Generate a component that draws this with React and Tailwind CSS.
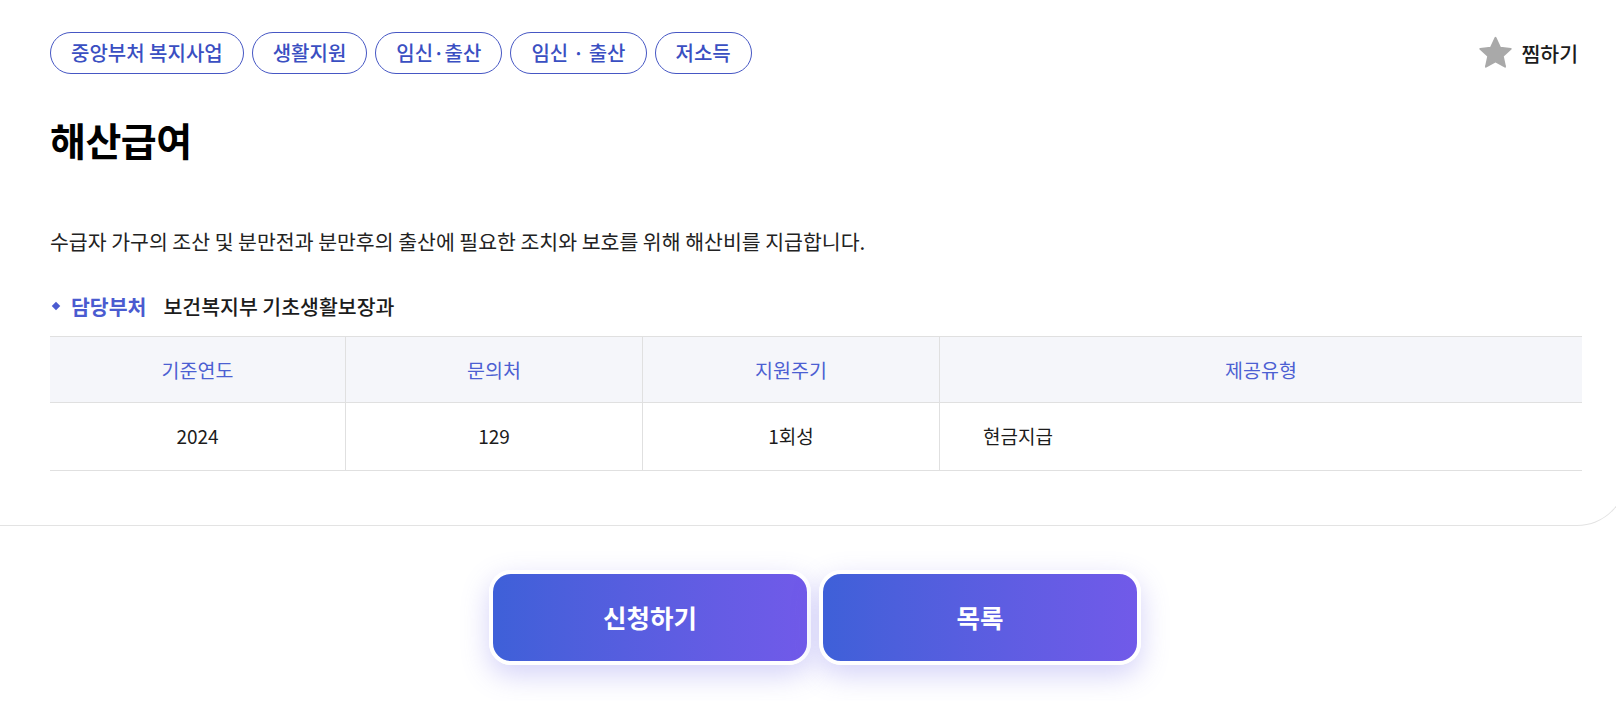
import React from "react";

const tags = ["중앙부처 복지사업", "생활지원", "임신·출산", "임신 · 출산", "저소득"];

export default function App() {
  return (
    <div
      className="w-[1616px] h-[701px] overflow-hidden bg-white text-[#222]"
      style={{ fontFamily: '"Noto Sans CJK KR", "Noto Sans", sans-serif' }}
    >
      <div className="ml-[-80px] w-[1707px] border-b border-r border-[#e3e3e3] rounded-br-[50px] rounded-bl-[50px] pt-[32px] pb-[54px] pl-[130px] pr-[44px]">
        <div className="flex items-center justify-between h-[42px]">
          <div className="flex gap-[8px]">
            {tags.map((t) => (
              <span
                key={t}
                className="h-[42px] flex items-center px-[20px] rounded-full border border-[#4657c4] text-[#3a4fc2] text-[20px] font-medium leading-none"
              >
                {t}
              </span>
            ))}
          </div>
          <div className="flex items-center gap-[7px] mr-[4px]">
            <svg width="37" height="36" viewBox="0 0 24 24">
              <path
                d="M12 1.8l3.1 6.6 7.1.8-5.3 4.9 1.5 7.1L12 17.6l-6.4 3.6 1.5-7.1L1.8 9.2l7.1-.8z"
                fill="#a9a9a9"
                stroke="#a9a9a9"
                strokeWidth="1.2"
                strokeLinejoin="round"
              />
            </svg>
            <span className="text-[20.5px] font-medium text-[#1c1c1c]">찜하기</span>
          </div>
        </div>

        <h1 className="mt-[42px] text-[39px] leading-[47px] font-bold text-black tracking-[-0.5px]">해산급여</h1>

        <p className="mt-[65px] text-[20.5px] leading-[27px] text-[#222]">
          수급자 가구의 조산 및 분만전과 분만후의 출산에 필요한 조치와 보호를 위해 해산비를 지급합니다.
        </p>

        <div className="mt-[38px] flex items-center h-[26px] text-[20.5px]">
          <span className="w-[6px] h-[6px] bg-[#4a5bd0] rotate-45 ml-[3px] mr-[12px]"></span>
          <span className="text-[#4a5bd0] font-semibold">담당부처</span>
          <span className="ml-[17px] font-medium text-[#1c1c1c]">보건복지부 기초생활보장과</span>
        </div>

        <div className="mt-[17px] border-t border-b border-[#e0e0e0]">
          <div className="grid grid-cols-[296px_297px_297px_1fr] h-[66px] bg-[#f5f6fa] border-b border-[#e0e0e0] text-[#4c5fd2] text-[19.5px]">
            <div className="flex items-center justify-center border-r border-[#e0e0e0]">기준연도</div>
            <div className="flex items-center justify-center border-r border-[#e0e0e0]">문의처</div>
            <div className="flex items-center justify-center border-r border-[#e0e0e0]">지원주기</div>
            <div className="flex items-center justify-center">제공유형</div>
          </div>
          <div className="grid grid-cols-[296px_297px_297px_1fr] h-[67px] text-[19px] text-[#1c1c1c]">
            <div className="flex items-center justify-center border-r border-[#e0e0e0]">2024</div>
            <div className="flex items-center justify-center border-r border-[#e0e0e0]">129</div>
            <div className="flex items-center justify-center border-r border-[#e0e0e0]">1회성</div>
            <div className="flex items-center pl-[43px]">현금지급</div>
          </div>
        </div>
      </div>

      <div className="mt-[44px] flex gap-[8px] pl-[489px]">
        {["신청하기", "목록"].map((b) => (
          <button
            key={b}
            className="w-[322px] h-[95px] rounded-[22px] border-4 border-white bg-gradient-to-r from-[#3e60d8] to-[#715ae9] text-white text-[25.5px] font-bold shadow-[0_10px_28px_rgba(100,92,230,0.28)]"
          >
            {b}
          </button>
        ))}
      </div>
    </div>
  );
}
